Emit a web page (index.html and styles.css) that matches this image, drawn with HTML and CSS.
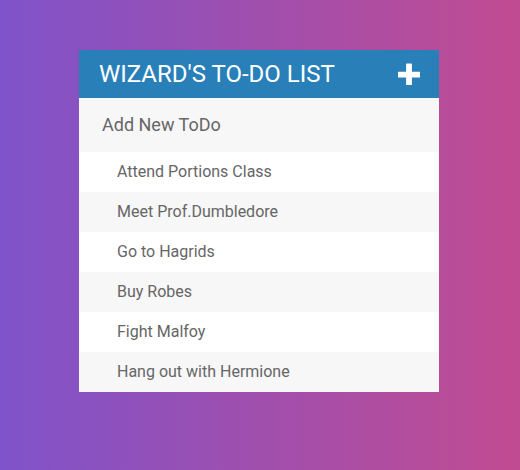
FILE: index.html
```html
<!DOCTYPE html>
<html lang="en">
<head>
<meta charset="utf-8">
<title>Wizard's To-Do List</title>
<link rel="stylesheet" href="styles.css">
</head>
<body>
<div class="page">
  <div class="todo">
    <h1 class="todo-title">Wizard's To-Do List
      <span class="add-btn" aria-label="Add">
        <svg viewBox="0 0 22 22" width="22" height="22"><path d="M8.8 0.5h4.4a0.7 0.7 0 0 1 0.7 0.7v7.6h7.6a0.7 0.7 0 0 1 0.7 0.7v4.4a0.7 0.7 0 0 1-0.7 0.7h-7.6v7.6a0.7 0.7 0 0 1-0.7 0.7h-4.4a0.7 0.7 0 0 1-0.7-0.7v-7.6h-7.6a0.7 0.7 0 0 1-0.7-0.7v-4.4a0.7 0.7 0 0 1 0.7-0.7h7.6v-7.6a0.7 0.7 0 0 1 0.7-0.7z" fill="#fff"/></svg>
      </span>
    </h1>
    <input class="todo-input" type="text" placeholder="Add New ToDo">
    <ul class="todo-list">
      <li class="todo-item">Attend Portions Class</li>
      <li class="todo-item">Meet Prof.Dumbledore</li>
      <li class="todo-item">Go to Hagrids</li>
      <li class="todo-item">Buy Robes</li>
      <li class="todo-item">Fight Malfoy</li>
      <li class="todo-item">Hang out with Hermione</li>
    </ul>
  </div>
</div>
</body>
</html>
```
FILE: styles.css
```css
html, body {
  margin: 0;
  height: 100%;
}
body {
  font-family: Roboto, "Liberation Sans", Arial, sans-serif;
  background: linear-gradient(90deg, #7f53ca 0%, #c14b91 100%);
}
.page {
  display: flex;
  justify-content: center;
  padding: 50px 2px 0 0;
}
.todo {
  width: 360px;
  background: #f7f7f7;
}
.todo-title {
  margin: 0;
  display: flex;
  align-items: center;
  justify-content: space-between;
  background: #2980b9;
  color: #fff;
  text-transform: uppercase;
  font-size: 24px;
  font-weight: 400;
  line-height: 28px;
  padding: 10px 19px 10px 20px;
}
.add-btn {
  display: flex;
  margin-top: -1px;
}
.todo-input {
  display: block;
  box-sizing: border-box;
  width: 100%;
  height: 54px;
  margin: 0;
  padding: 0 13px 2px 20px;
  border: 3px solid transparent;
  background: #f7f7f7;
  font-family: inherit;
  font-size: 18px;
  color: #666;
  outline: none;
}
.todo-input::placeholder {
  color: #666;
  opacity: 1;
}
.todo-list {
  list-style: none;
  margin: 0;
  padding: 0;
}
.todo-item {
  height: 40px;
  line-height: 40px;
  padding-left: 38px;
  font-size: 16px;
  color: #666;
  background: #fff;
}
.todo-item:nth-child(2n) {
  background: #f7f7f7;
}
```
